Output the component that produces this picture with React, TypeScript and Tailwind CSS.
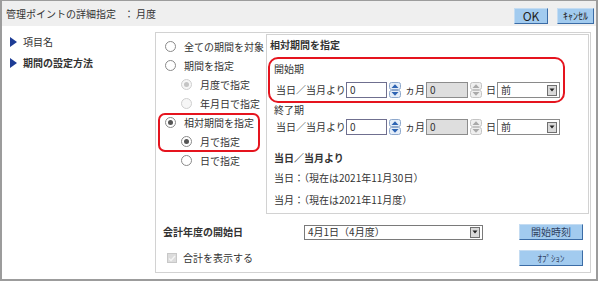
import React from "react";

function Radio({ checked, disabled }: { checked?: boolean; disabled?: boolean }) {
  return (
    <span
      className={`flex h-[11px] w-[11px] shrink-0 items-center justify-center rounded-full border ${
        disabled ? "border-[#cfcfcf] bg-[#f6f6f6]" : "border-[#8a8a8a] bg-white"
      }`}
    >
      {checked && (
        <span className={`h-[5px] w-[5px] rounded-full ${disabled ? "bg-[#c4c4c4]" : "bg-[#555]"}`} />
      )}
    </span>
  );
}

function RadioRow({
  label,
  indent,
  checked,
  disabled,
}: {
  label: string;
  indent?: boolean;
  checked?: boolean;
  disabled?: boolean;
}) {
  return (
    <div className={`flex h-[19px] items-center gap-[8px] ${indent ? "pl-[25px]" : "pl-[9px]"}`}>
      <Radio checked={checked} disabled={disabled} />
      <span>{label}</span>
    </div>
  );
}

function Spinner({ disabled }: { disabled?: boolean }) {
  const fill = disabled ? "#a9a9a9" : "#2c63b3";
  const bg = disabled ? "#efefef" : "#e4edf8";
  const line = disabled ? "#c4c4c4" : "#8ea8cc";
  return (
    <svg width="12" height="16" viewBox="0 0 12 16" className="ml-[2px] shrink-0">
      <rect x="0.5" y="0.5" width="11" height="7" rx="2" fill={bg} stroke={line} />
      <rect x="0.5" y="8.5" width="11" height="7" rx="2" fill={bg} stroke={line} />
      <path d="M2.5 6 L6 2.2 L9.5 6 Z" fill={fill} />
      <path d="M2.5 10 L6 13.8 L9.5 10 Z" fill={fill} />
    </svg>
  );
}

function DropButton() {
  return (
    <span className="flex h-[11px] w-[10px] items-center justify-center border border-[#707070] bg-[#d9d9d9]">
      <svg width="6" height="4" viewBox="0 0 6 4">
        <path d="M0.5 0.5 H5.5 L3 3.5 Z" fill="#222" />
      </svg>
    </span>
  );
}

function PeriodRow() {
  return (
    <div className="flex h-[16px] items-center">
      <span className="ml-[9px] w-[70px]">当日／当月より</span>
      <span className="flex h-[16px] w-[41px] items-center border border-[#6f6f8f] bg-white pl-[3px]">0</span>
      <Spinner />
      <span className="w-[24px] pl-[4px]">ヵ月</span>
      <span className="ml-[1px] flex h-[16px] w-[42px] items-center border border-[#8c8c8c] bg-[#dedede] pl-[3px]">
        0
      </span>
      <Spinner disabled />
      <span className="w-[15px] pl-[4px]">日</span>
      <span className="flex h-[16px] w-[63px] items-center justify-between border border-[#8a8a8a] bg-white pl-[3px] pr-[2px]">
        <span>前</span>
        <DropButton />
      </span>
    </div>
  );
}

function BlueButton({ label, className }: { label: string; className?: string }) {
  return (
    <button
      className={`flex items-center justify-center border border-t-[#c4dcf2] border-l-[#c4dcf2] border-b-[#3b6ca6] border-r-[#3b6ca6] bg-[#a2cbef] text-[#2f3f5f] ${className ?? ""}`}
    >
      {label}
    </button>
  );
}

export default function App() {
  return (
    <div className="h-[282px] w-[600px] bg-white font-['Noto_Sans_CJK_JP','Noto_Sans',sans-serif] text-[10px] leading-none text-[#333]">
      <div className="flex h-[281px] w-[598px] flex-col border-x-2 border-b-2 border-t border-[#9c9c9c]">
        <div className="flex h-[25px] items-center bg-[#efefef] pl-[4px] pr-[2px]">
          <span>管理ポイントの詳細指定</span>
          <span className="ml-[8px]">：</span>
          <span className="ml-[2px]">月度</span>
          <div className="ml-auto flex items-center gap-[9px] pt-[4px]">
            <BlueButton label="OK" className="h-[16px] w-[34px] text-[12px] text-[#222]" />
            <BlueButton label="ｷｬﾝｾﾙ" className="h-[16px] w-[37px] text-[10px] text-[#222]" />
          </div>
        </div>

        <div className="flex flex-1">
          <div className="w-[153px] pl-[8px] pt-[5px]">
            <div className="flex h-[21px] items-center gap-[6px]">
              <svg width="7" height="10" viewBox="0 0 7 10">
                <path d="M0 0 L7 5 L0 10 Z" fill="#1d3c95" />
              </svg>
              <span>項目名</span>
            </div>
            <div className="flex h-[21px] items-center gap-[6px]">
              <svg width="7" height="10" viewBox="0 0 7 10">
                <path d="M0 0 L7 5 L0 10 Z" fill="#1d3c95" />
              </svg>
              <span className="font-bold">期間の設定方法</span>
            </div>
          </div>

          <div className="mt-[6px] flex h-[241px] w-[436px] flex-col border border-[#d2d2d2]">
            <div className="flex">
              <div className="w-[110px] pt-[4px]">
                <RadioRow label="全ての期間を対象" />
                <RadioRow label="期間を指定" />
                <RadioRow label="月度で指定" indent checked disabled />
                <RadioRow label="年月日で指定" indent disabled />
                <div className="relative">
                  <RadioRow label="相対期間を指定" checked />
                  <RadioRow label="月で指定" indent checked />
                  <div className="absolute bottom-[-1px] left-[2px] right-[6px] top-0 rounded-[7px] border-2 border-[#e5141e]" />
                </div>
                <RadioRow label="日で指定" indent />
              </div>

              <div className="mr-[1px] mt-[1px] flex h-[180px] w-[323px] flex-col border border-[#d2d2d2]">
                <div className="flex h-[20px] items-center pl-[3px] font-bold">相対期間を指定</div>
                <div className="relative mt-[6px]">
                  <div className="flex h-[16px] items-center pl-[7px]">開始期</div>
                  <div className="mt-[5px]">
                    <PeriodRow />
                  </div>
                  <div className="absolute bottom-[-5px] left-[1px] right-[23px] top-[-4px] rounded-[10px] border-2 border-[#e5141e]" />
                </div>
                <div className="mt-[4px] flex h-[16px] items-center pl-[7px]">終了期</div>
                <div className="mt-[1px]">
                  <PeriodRow />
                </div>
                <div className="mt-[15px] flex h-[16px] items-center pl-[7px] font-bold">当日／当月より</div>
                <div className="mt-[4px] flex h-[16px] items-center pl-[7px]">当日：（現在は2021年11月30日）</div>
                <div className="mt-[6px] flex h-[16px] items-center pl-[7px]">当月：（現在は2021年11月度）</div>
              </div>
            </div>

            <div className="mt-[10px] flex h-[16px] items-center pl-[7px] pr-[7px]">
              <span className="w-[141px] font-bold">会計年度の開始日</span>
              <span className="flex h-[15px] w-[179px] items-center justify-between border border-[#7a7a7a] bg-white pl-[3px] pr-[2px]">
                <span>4月1日（4月度）</span>
                <DropButton />
              </span>
              <BlueButton label="開始時刻" className="ml-auto h-[16px] w-[64px]" />
            </div>

            <div className="mt-[10px] flex h-[16px] items-center pl-[11px] pr-[7px]">
              <span className="flex h-[10px] w-[10px] items-center justify-center border border-[#c8c8c8] bg-[#dcdcdc]">
                <svg width="8" height="7" viewBox="0 0 8 7">
                  <path d="M1 3.5 L3 5.5 L7 1" fill="none" stroke="#f4f4f4" strokeWidth="1.4" />
                </svg>
              </span>
              <span className="ml-[6px]">合計を表示する</span>
              <BlueButton label="ｵﾌﾟｼｮﾝ" className="ml-auto h-[16px] w-[64px] text-[9px]" />
            </div>
          </div>
        </div>
      </div>
    </div>
  );
}
